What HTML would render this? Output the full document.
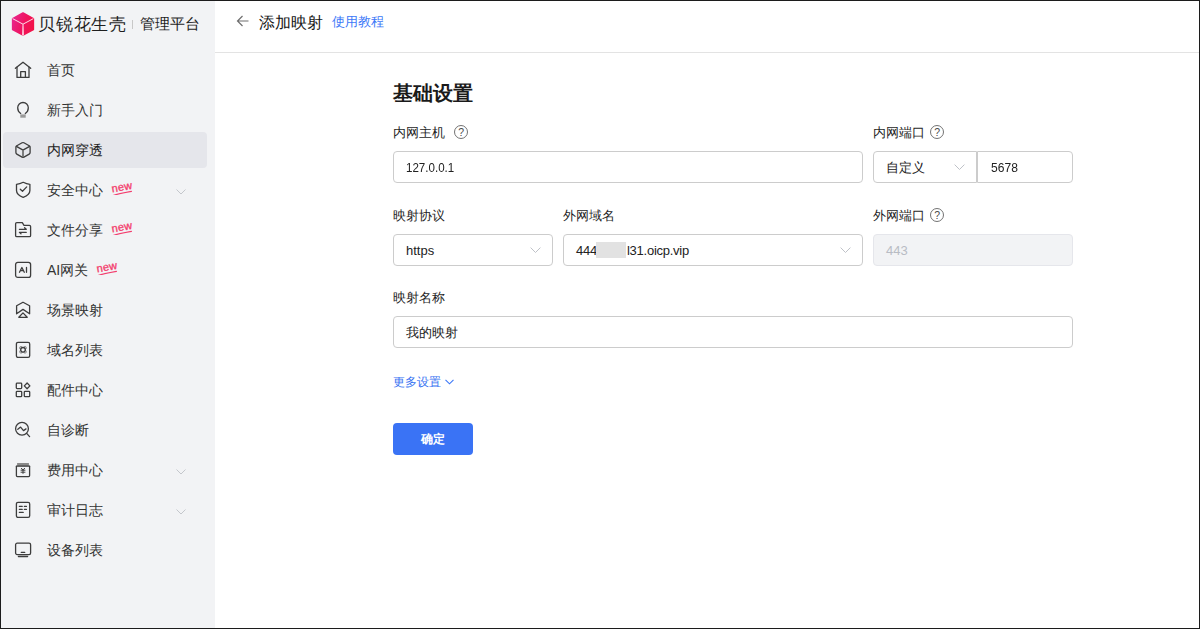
<!DOCTYPE html>
<html><head><meta charset="utf-8">
<style>
*{box-sizing:border-box;margin:0;padding:0}
html,body{width:1200px;height:629px;overflow:hidden;background:#fff}
body{font-family:"Liberation Sans",sans-serif;color:#333;position:relative}
.frame{position:absolute;left:0;top:0;width:1200px;height:629px;border:1px solid #1c1c1c;pointer-events:none;z-index:10}
.side{position:absolute;left:0;top:0;width:215px;height:629px;background:#f2f3f5}
.logo{position:absolute;left:12px;top:12px;width:22px;height:24px}
.brand{position:absolute;left:38px;top:11px;font-size:16.5px;line-height:26px;color:#1e1e1e;letter-spacing:0.75px}
.sep{position:absolute;left:132px;top:20px;width:1px;height:9px;background:#c8c8c8}
.plat{position:absolute;left:139.5px;top:12px;font-size:15px;line-height:24px;color:#1e1e1e;font-weight:500}
.item{position:absolute;left:3px;width:204px;height:36px;border-radius:4px}
.item.act{background:#e5e6eb}
.item.act .tx{color:#1d1d1d}
.item svg.ic{position:absolute;left:9px;top:6px;width:24px;height:24px}
.item .tx{position:absolute;left:44px;top:0;line-height:36px;font-size:14px;color:#333;white-space:nowrap}
.item .chev{position:absolute;left:173px;top:17px}
.item .new{position:absolute;top:7px}
.abs{position:absolute;white-space:nowrap}
.hdrline{position:absolute;left:215px;top:52px;width:985px;height:1px;background:#e3e3e3}
.lbl{font-size:13px;line-height:22px;color:#1f1f1f}
.inp{position:absolute;height:32px;border:1px solid #cccccc;border-radius:4px;background:#fff}
.inp .v{position:absolute;left:12px;top:1px;line-height:30px;font-size:13px;color:#222;white-space:nowrap}
.q{position:absolute;width:14px;height:14px}
</style></head><body>
<div class="side">
  <svg class="abs" style="left:0;top:0" width="40" height="40" viewBox="0 0 40 40"><defs><linearGradient id="lg" x1="0" y1="0.3" x2="1" y2="0.7"><stop offset="0" stop-color="#e8248a"/><stop offset="0.55" stop-color="#f0135e"/><stop offset="1" stop-color="#f31248"/></linearGradient></defs>
  <path d="M23 13 L33.3 18.7 L33.3 29.6 L23 35.1 L12.7 29.6 L12.7 18.7 Z" fill="url(#lg)" stroke="url(#lg)" stroke-width="1.7" stroke-linejoin="round"/>
  <path d="M12.6 18.6 L23 24.2 L33.4 18.6" stroke="#fff" stroke-width="0.9" fill="none" opacity="0.95"/>
  <path d="M22.5 24.2 L23.5 24.2 L23.9 35.6 L22.1 35.6 Z" fill="#fff" opacity="0.85"/></svg>
  <div class="brand">贝锐花生壳</div>
  <div class="sep"></div>
  <div class="plat">管理平台</div>
<div class="item" style="top:52px"><svg class="ic" viewBox="0 0 24 24"><path d="M3.4 10.3 L11 4.2 L18.7 10.3" stroke="#3d3d3d" stroke-width="1.3" fill="none" stroke-linecap="round" stroke-linejoin="round"/><path d="M5 9.2 V19.4 H17 V9.2" stroke="#3d3d3d" stroke-width="1.3" fill="none" stroke-linecap="round" stroke-linejoin="round"/><path d="M8.7 19.4 V13.6 H13.4 V19.4" stroke="#3d3d3d" stroke-width="1.3" fill="none" stroke-linecap="round" stroke-linejoin="round"/></svg><div class="tx">首页</div></div>
<div class="item" style="top:92px"><svg class="ic" viewBox="0 0 24 24"><path d="M8.7 15.5 Q5.7 13.6 5.7 9.8 A5.3 5.3 0 0 1 16.3 9.8 Q16.3 13.6 13.3 15.5" stroke="#3d3d3d" stroke-width="1.3" fill="none" stroke-linecap="round" stroke-linejoin="round"/><rect x="8.3" y="16.4" width="5.4" height="3.3" fill="#9a9a9a"/></svg><div class="tx">新手入门</div></div>
<div class="item act" style="top:132px"><svg class="ic" viewBox="0 0 24 24"><path d="M10.1 4.8 Q11 4.3 11.9 4.8 L17.2 7.8 Q18.1 8.3 18.1 9.3 V14.6 Q18.1 15.6 17.2 16.1 L11.9 19.1 Q11 19.6 10.1 19.1 L4.8 16.1 Q3.9 15.6 3.9 14.6 V9.3 Q3.9 8.3 4.8 7.8 Z" stroke="#3d3d3d" stroke-width="1.3" fill="none" stroke-linecap="round" stroke-linejoin="round"/><path d="M4.4 8.4 L10.2 11.6 Q11 12.1 11.8 11.6 L17.6 8.4" stroke="#3d3d3d" stroke-width="1.3" fill="none" stroke-linecap="round" stroke-linejoin="round"/><path d="M11 12 V19.3" stroke="#6a6a6a" stroke-width="1.7" fill="none"/></svg><div class="tx">内网穿透</div></div>
<div class="item" style="top:172px"><svg class="ic" viewBox="0 0 24 24"><path d="M11.2 4.3 Q14.6 6.1 17.9 6.3 V12.6 Q17.9 17 11.2 19.4 Q4.5 17 4.5 12.6 V6.3 Q7.8 6.1 11.2 4.3 Z" stroke="#3d3d3d" stroke-width="1.3" fill="none" stroke-linecap="round" stroke-linejoin="round"/><path d="M8.3 11.3 L10.5 13.3 L14.7 8.9" stroke="#3d3d3d" stroke-width="1.3" fill="none" stroke-linecap="round" stroke-linejoin="round"/></svg><div class="tx">安全中心</div><svg class="new" style="left:106px" width="24" height="16" viewBox="0 0 24 16"><g transform="rotate(-10 12 8)"><text x="2.4" y="11.8" font-family="Liberation Sans" font-size="11" letter-spacing="0.3" stroke="#f23d6d" stroke-width="0.35" fill="#f23d6d">new</text></g><g transform="rotate(-9 12 8)"><path d="M2.8 15.2 Q8 14.2 21.6 14" stroke="#f23d6d" stroke-width="1.2" fill="none" stroke-linecap="round"/></g></svg><svg class="chev" width="10" height="6" viewBox="0 0 10 6"><path d="M0.5 0.5 L5 5 L9.5 0.5" stroke="#c4c7cc" stroke-width="1" fill="none"/></svg></div>
<div class="item" style="top:212px"><svg class="ic" viewBox="0 0 24 24"><path d="M3.6 5.8 Q3.6 4.6 4.8 4.6 H10.3 L12 7.3 H17.4 Q18.6 7.3 18.6 8.5 V17.4 Q18.6 18.6 17.4 18.6 H4.8 Q3.6 18.6 3.6 17.4 Z" stroke="#3d3d3d" stroke-width="1.3" fill="none" stroke-linecap="round" stroke-linejoin="round"/><path d="M7.4 11.3 H14.3 L12.6 9.8 M14.3 14.3 H7.4 L9 15.8" stroke="#3d3d3d" stroke-width="1.3" fill="none" stroke-linecap="round" stroke-linejoin="round"/></svg><div class="tx">文件分享</div><svg class="new" style="left:106px" width="24" height="16" viewBox="0 0 24 16"><g transform="rotate(-10 12 8)"><text x="2.4" y="11.8" font-family="Liberation Sans" font-size="11" letter-spacing="0.3" stroke="#f23d6d" stroke-width="0.35" fill="#f23d6d">new</text></g><g transform="rotate(-9 12 8)"><path d="M2.8 15.2 Q8 14.2 21.6 14" stroke="#f23d6d" stroke-width="1.2" fill="none" stroke-linecap="round"/></g></svg></div>
<div class="item" style="top:252px"><svg class="ic" viewBox="0 0 24 24"><rect x="3.6" y="4.4" width="15" height="15" rx="2.2" stroke="#3d3d3d" stroke-width="1.3" fill="none" stroke-linecap="round" stroke-linejoin="round"/><path d="M7.5 14.2 L9.9 9.5 L12.3 14.2 M8.4 12.6 H11.4 M14.5 9.4 V14.3" stroke="#3d3d3d" stroke-width="1.3" fill="none" stroke-linecap="round" stroke-linejoin="round"/></svg><div class="tx">AI网关</div><svg class="new" style="left:91px" width="24" height="16" viewBox="0 0 24 16"><g transform="rotate(-10 12 8)"><text x="2.4" y="11.8" font-family="Liberation Sans" font-size="11" letter-spacing="0.3" stroke="#f23d6d" stroke-width="0.35" fill="#f23d6d">new</text></g><g transform="rotate(-9 12 8)"><path d="M2.8 15.2 Q8 14.2 21.6 14" stroke="#f23d6d" stroke-width="1.2" fill="none" stroke-linecap="round"/></g></svg></div>
<div class="item" style="top:292px"><svg class="ic" viewBox="0 0 24 24"><path d="M11 4.2 L17.6 7.8 V15.8 L11 11.4 L4.6 15.8 V7.8 Z" stroke="#3d3d3d" stroke-width="1.3" fill="none" stroke-linecap="round" stroke-linejoin="round"/><path d="M11 14.9 L15.2 19.3 H6.8 Z" stroke="#3d3d3d" stroke-width="1.3" fill="none" stroke-linecap="round" stroke-linejoin="round"/></svg><div class="tx">场景映射</div></div>
<div class="item" style="top:332px"><svg class="ic" viewBox="0 0 24 24"><rect x="4.4" y="4.3" width="13.3" height="15.1" rx="1.6" stroke="#3d3d3d" stroke-width="1.3" fill="none" stroke-linecap="round" stroke-linejoin="round"/><g stroke="#8a8a8a" stroke-width="1" fill="none"><circle cx="9" cy="9.9" r="1.4"/><circle cx="13" cy="9.9" r="1.4"/><circle cx="9" cy="13.7" r="1.4"/><circle cx="13" cy="13.7" r="1.4"/></g><circle cx="11" cy="11.8" r="2.3" stroke="#3d3d3d" stroke-width="1.3" fill="#f2f3f5"/></svg><div class="tx">域名列表</div></div>
<div class="item" style="top:372px"><svg class="ic" viewBox="0 0 24 24"><rect x="4.3" y="5.2" width="5.4" height="5.4" rx="0.8" stroke="#3d3d3d" stroke-width="1.3" fill="none" stroke-linecap="round" stroke-linejoin="round"/><rect x="4.3" y="13.3" width="5.4" height="5.4" rx="0.8" stroke="#3d3d3d" stroke-width="1.3" fill="none" stroke-linecap="round" stroke-linejoin="round"/><rect x="12.3" y="13.3" width="5.4" height="5.4" rx="0.8" stroke="#3d3d3d" stroke-width="1.3" fill="none" stroke-linecap="round" stroke-linejoin="round"/><path d="M15.1 5 L17.9 7.9 L15.1 10.7 L12.3 7.9 Z" stroke="#3d3d3d" stroke-width="1.3" fill="none" stroke-linecap="round" stroke-linejoin="round"/></svg><div class="tx">配件中心</div></div>
<div class="item" style="top:412px"><svg class="ic" viewBox="0 0 24 24"><circle cx="10" cy="10.8" r="6.4" stroke="#3d3d3d" stroke-width="1.3" fill="none" stroke-linecap="round" stroke-linejoin="round"/><path d="M14.9 15.6 L17.6 18.6" stroke="#3d3d3d" stroke-width="1.3" fill="none" stroke-linecap="round" stroke-linejoin="round"/><path d="M5.8 11.3 L8.6 9.1 L11.5 12.6 L14 10.9" stroke="#3d3d3d" stroke-width="1.3" fill="none" stroke-linecap="round" stroke-linejoin="round"/></svg><div class="tx">自诊断</div></div>
<div class="item" style="top:452px"><svg class="ic" viewBox="0 0 24 24"><path d="M4.4 8.4 V17.6 Q4.4 18.6 5.4 18.6 H16.6 Q17.6 18.6 17.6 17.6 V8.4" stroke="#3d3d3d" stroke-width="1.3" fill="none" stroke-linecap="round" stroke-linejoin="round"/><rect x="5.1" y="5" width="11.8" height="3.2" fill="#8a8a8a"/><path d="M4.4 8.2 H17.6" stroke="#3d3d3d" stroke-width="1.3" fill="none" stroke-linecap="round" stroke-linejoin="round"/><path d="M9 10.2 L11 11.8 L13 10.2 M8.6 12.2 H13.4 M8.6 14.2 H13.4 M11 11.8 V15.8" stroke="#3d3d3d" stroke-width="1" fill="none"/></svg><div class="tx">费用中心</div><svg class="chev" width="10" height="6" viewBox="0 0 10 6"><path d="M0.5 0.5 L5 5 L9.5 0.5" stroke="#c4c7cc" stroke-width="1" fill="none"/></svg></div>
<div class="item" style="top:492px"><svg class="ic" viewBox="0 0 24 24"><rect x="4.4" y="4.3" width="13.3" height="15.1" rx="1.6" stroke="#3d3d3d" stroke-width="1.3" fill="none" stroke-linecap="round" stroke-linejoin="round"/><path d="M7.4 8.4 H10.2 M12.4 8.4 H14.4 M7.4 11.4 H10.2 M12.4 11.4 H14.4 M7.4 14.4 H11.2" stroke="#3d3d3d" stroke-width="1.3" fill="none" stroke-linecap="round" stroke-linejoin="round"/></svg><div class="tx">审计日志</div><svg class="chev" width="10" height="6" viewBox="0 0 10 6"><path d="M0.5 0.5 L5 5 L9.5 0.5" stroke="#c4c7cc" stroke-width="1" fill="none"/></svg></div>
<div class="item" style="top:532px"><svg class="ic" viewBox="0 0 24 24"><rect x="3.6" y="5.2" width="15" height="11.4" rx="1.6" stroke="#3d3d3d" stroke-width="1.3" fill="none" stroke-linecap="round" stroke-linejoin="round"/><path d="M9.3 14.4 H12.7 M6.4 18.5 H15.6" stroke="#3d3d3d" stroke-width="1.3" fill="none" stroke-linecap="round" stroke-linejoin="round"/></svg><div class="tx">设备列表</div></div>
</div>
<div class="hdrline"></div>
<svg class="abs" style="left:236px;top:14px;opacity:0.85" width="14" height="14" viewBox="0 0 14 14"><path d="M1.5 7 H12.5 M6.5 2 L1.5 7 L6.5 12" stroke="#555" stroke-width="1.2" fill="none"/></svg>
<div class="abs" style="left:259px;top:12px;font-size:16px;line-height:22px;color:#151515">添加映射</div>
<div class="abs" style="left:332px;top:12px;font-size:13px;line-height:20px;color:#3c78f8">使用教程</div>

<div class="abs" style="left:393px;top:80px;font-size:20px;line-height:26px;font-weight:bold;color:#1a1a1a">基础设置</div>

<div class="abs lbl" style="left:393px;top:122px">内网主机</div>
<svg class="q" style="left:454px;top:125px" viewBox="0 0 14 14"><circle cx="7" cy="7" r="6.5" stroke="#5a5a5a" stroke-width="0.85" fill="none"/><text x="7.2" y="10.8" text-anchor="middle" font-family="Liberation Sans" font-size="10.5" fill="#4a4a4a">?</text></svg>
<div class="inp" style="left:393px;top:151px;width:470px"><div class="v" style="transform:scaleX(0.89);transform-origin:0 0">127.0.0.1</div></div>
<div class="abs lbl" style="left:873px;top:122px">内网端口</div>
<svg class="q" style="left:930px;top:125px" viewBox="0 0 14 14"><circle cx="7" cy="7" r="6.5" stroke="#5a5a5a" stroke-width="0.85" fill="none"/><text x="7.2" y="10.8" text-anchor="middle" font-family="Liberation Sans" font-size="10.5" fill="#4a4a4a">?</text></svg>
<div class="inp" style="left:873px;top:151px;width:104px;border-top-right-radius:0;border-bottom-right-radius:0"><div class="v">自定义</div></div>
<svg class="abs" style="left:954px;top:164px" width="12" height="7" viewBox="0 0 12 7"><path d="M0.6 0.6 L5.5 5.5 L10.4 0.6" stroke="#bfc2c8" stroke-width="1" fill="none"/></svg>
<div class="inp" style="left:977px;top:151px;width:96px;border-top-left-radius:0;border-bottom-left-radius:0"><div class="v" style="transform:scaleX(0.93);transform-origin:0 0;left:13px">5678</div></div>

<div class="abs lbl" style="left:393px;top:205px">映射协议</div>
<div class="inp" style="left:393px;top:234px;width:160px"><div class="v">https</div></div>
<svg class="abs" style="left:530px;top:247px" width="12" height="7" viewBox="0 0 12 7"><path d="M0.6 0.6 L5.5 5.5 L10.4 0.6" stroke="#bfc2c8" stroke-width="1" fill="none"/></svg>
<div class="abs lbl" style="left:563px;top:205px">外网域名</div>
<div class="inp" style="left:563px;top:234px;width:300px"><div class="v" style="letter-spacing:-0.25px">444<span style="display:inline-block;width:30px"></span>l31.oicp.vip</div></div>
<div class="abs" style="left:596px;top:242px;width:30px;height:16px;background:#e2e2e2;filter:blur(0.5px)"></div>
<svg class="abs" style="left:840px;top:247px" width="12" height="7" viewBox="0 0 12 7"><path d="M0.6 0.6 L5.5 5.5 L10.4 0.6" stroke="#bfc2c8" stroke-width="1" fill="none"/></svg>
<div class="abs lbl" style="left:873px;top:205px">外网端口</div>
<svg class="q" style="left:930px;top:208px" viewBox="0 0 14 14"><circle cx="7" cy="7" r="6.5" stroke="#5a5a5a" stroke-width="0.85" fill="none"/><text x="7.2" y="10.8" text-anchor="middle" font-family="Liberation Sans" font-size="10.5" fill="#4a4a4a">?</text></svg>
<div class="inp" style="left:873px;top:234px;width:200px;background:#f2f3f5;border-color:#e5e6eb"><div class="v" style="color:#b8bcc4">443</div></div>

<div class="abs lbl" style="left:393px;top:287px">映射名称</div>
<div class="inp" style="left:393px;top:316px;width:680px"><div class="v">我的映射</div></div>

<div class="abs" style="left:393px;top:373px;font-size:12px;line-height:18px;color:#3671f2;font-weight:500">更多设置</div>
<svg class="abs" style="left:445px;top:379px" width="9" height="6" viewBox="0 0 9 6"><path d="M0.5 0.8 L4.5 4.8 L8.5 0.8" stroke="#3c78f8" stroke-width="1.1" fill="none"/></svg>

<div class="abs" style="left:393px;top:423px;width:80px;height:32px;border-radius:4px;background:#3a73f5;color:#fff;font-size:12px;font-weight:bold;line-height:32px;text-align:center">确定</div>

<div class="frame"></div>
</body></html>
